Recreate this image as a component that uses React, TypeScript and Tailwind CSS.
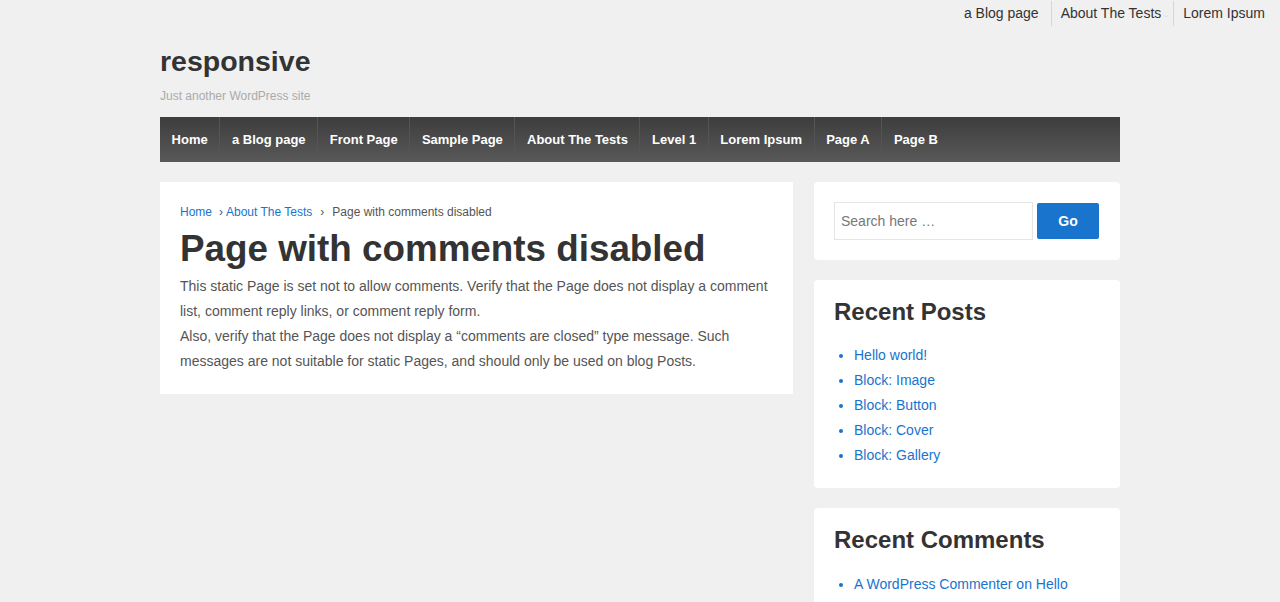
import React from 'react';

const topMenu = ['a Blog page', 'About The Tests', 'Lorem Ipsum'];
const mainMenu = ['Home', 'a Blog page', 'Front Page', 'Sample Page', 'About The Tests', 'Level 1', 'Lorem Ipsum', 'Page A', 'Page B'];
const recentPosts = ['Hello world!', 'Block: Image', 'Block: Button', 'Block: Cover', 'Block: Gallery'];

const font = { fontFamily: '"Liberation Sans", Arial, Helvetica, sans-serif' };

export default function App() {
    return (
        <div className="min-h-[602px] bg-[#f0f0f0] text-[#333]" style={font}>
            {/* top menu */}
            <div className="flex justify-end pt-[1px]">
                {topMenu.map((item, i) => (
                    <div
                        key={item}
                        className={`relative h-[25px] pl-[9px] text-[14px] leading-[24px] text-[#333] ${i > 0 ? 'border-l border-[#d6d6d6]' : ''} ${i === topMenu.length - 1 ? 'pr-[15px]' : 'pr-[12px]'}`}
                    >
                        {item}
                        {item === 'About The Tests' && (
                            <svg className="absolute right-[4px] top-[13px]" width="6" height="4" viewBox="0 0 6 4">
                                <path d="M0.5 0.5 L3 3 L5.5 0.5" fill="none" stroke="#e0e0e0" strokeWidth="1" />
                            </svg>
                        )}
                    </div>
                ))}
            </div>

            <div className="mx-auto w-[960px]">
                {/* site header */}
                <div className="pt-[18px]">
                    <div className="text-[28.5px] font-bold leading-[34px] text-[#333]">responsive</div>
                    <div className="mt-[10px] text-[12px] leading-[16px] text-[#aaa]">Just another WordPress site</div>
                </div>

                {/* main nav */}
                <nav className="mt-[13px] flex h-[45px] bg-gradient-to-b from-[#3d3d3d] to-[#595959]">
                    {mainMenu.map((item, i) => (
                        <div
                            key={item}
                            className={`flex items-center px-[11.6px] text-[13px] font-bold text-white ${i < mainMenu.length - 1 ? 'border-r border-[#545454]' : ''}`}
                        >
                            {item}
                        </div>
                    ))}
                </nav>

                <div className="mt-5 flex items-start gap-[21px]">
                    {/* content */}
                    <div className="w-[633px] bg-white px-5 pt-5 pb-[20px]">
                        <div className="flex text-[12px] leading-[20px] text-[#555]">
                            <span className="text-[#1874cd]">Home</span>
                            <span className="ml-[7px] mr-[3px]">›</span>
                            <span className="text-[#1874cd]">About The Tests</span>
                            <span className="ml-[8px] mr-[8px]">›</span>
                            <span>Page with comments disabled</span>
                        </div>
                        <h1 className="mt-[5px] text-[36.8px] font-bold leading-[43px] text-[#333]">Page with comments disabled</h1>
                        <div className="mt-[4px] text-[14px] leading-[25px] text-[#555]">
                            <p>This static Page is set not to allow comments. Verify that the Page does not display a comment list, comment reply links, or comment reply form.</p>
                            <p>Also, verify that the Page does not display a “comments are closed” type message. Such messages are not suitable for static Pages, and should only be used on blog Posts.</p>
                        </div>
                    </div>

                    {/* sidebar */}
                    <div className="flex w-[306px] flex-col gap-5">
                        <div className="rounded-[4px] bg-white p-5">
                            <div className="flex items-center gap-[4px]">
                                <div className="flex h-[38px] w-[199px] items-center border border-[#e5e5e5] px-[6px] text-[14px] text-[#777]">
                                    Search here …
                                </div>
                                <div className="flex h-[36px] w-[62px] items-center justify-center rounded-[2px] bg-[#1874cd] text-[14px] font-bold text-white">
                                    Go
                                </div>
                            </div>
                        </div>

                        <div className="rounded-[4px] bg-white p-5">
                            <h3 className="text-[24px] font-bold leading-[24px] text-[#333]">Recent Posts</h3>
                            <ul className="mt-[19px] list-disc pl-5 text-[14px] leading-[25px] text-[#1874cd]">
                                {recentPosts.map(p => (
                                    <li key={p}>{p}</li>
                                ))}
                            </ul>
                        </div>

                        <div className="rounded-[4px] bg-white p-5">
                            <h3 className="text-[24px] font-bold leading-[24px] text-[#333]">Recent Comments</h3>
                            <ul className="mt-[20px] list-disc pl-5 text-[14px] leading-[25px] text-[#1874cd]">
                                <li>A WordPress Commenter on Hello world!</li>
                            </ul>
                        </div>
                    </div>
                </div>
            </div>
        </div>
    );
}
